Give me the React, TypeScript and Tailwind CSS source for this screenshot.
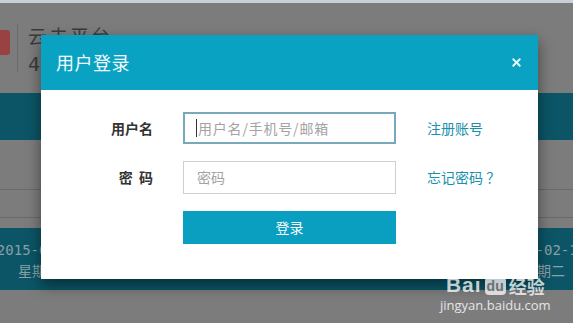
import { X } from 'lucide-react'

const CJK = { fontFamily: '"Microsoft YaHei", "Noto Sans CJK SC", "Noto Sans", sans-serif' }
const MONO = { fontFamily: '"DejaVu Sans Mono", "Liberation Mono", "Noto Sans CJK SC", monospace' }

function DateCol({ date, day }: { date: string; day: string }) {
  return (
    <div className="flex w-[78px] flex-col items-center gap-[3px] whitespace-nowrap text-[14px] leading-[17px] text-[#8aa0a6]" style={MONO}>
      <span>{date}</span>
      <span style={CJK}>{day}</span>
    </div>
  )
}

function Watermark() {
  return (
    <div className="pointer-events-none absolute left-[440px] top-[248px] flex flex-col items-center text-white/75">
      <svg width="40" height="34" viewBox="0 0 44 36" className="-mb-[8px] ml-[14px]" fill="none" stroke="rgba(255,255,255,0.5)" strokeWidth="1.5">
        <ellipse cx="10" cy="12" rx="4" ry="5" />
        <ellipse cx="19" cy="6" rx="4" ry="5" />
        <ellipse cx="29" cy="7" rx="4" ry="5" />
        <ellipse cx="36" cy="15" rx="4" ry="5" />
        <path d="M12 30 C12 20 32 20 32 30" />
      </svg>
      <div className="flex items-end gap-[3px] leading-none">
        <span className="text-[21px] font-bold tracking-[1px]" style={{ fontFamily: 'Arial, "Liberation Sans", sans-serif' }}>Bai</span>
        <span className="rounded-[4px] bg-white/75 px-[2px] text-[14px] font-bold leading-[18px] text-[#6f6f6f]" style={{ fontFamily: '"Liberation Sans", sans-serif' }}>du</span>
        <span className="text-[18px] font-bold" style={CJK}>经验</span>
      </div>
      <span className="mt-[4px] text-[13px] leading-none text-white/80" style={{ fontFamily: '"Open Sans", "Liberation Sans", sans-serif' }}>jingyan.baidu.com</span>
    </div>
  )
}

export default function App() {
  return (
    <div className="relative h-[323px] w-[573px] overflow-hidden bg-[#7c7c7c]" style={CJK}>
      {/* dimmed page behind the dialog */}
      <div className="h-[3px] bg-[#c9d0da]" />
      <div className="flex h-[90px] items-start">
        <div className="mt-[27px] h-[25px] w-[10px] rounded-r-[3px] bg-[#9a4242]" />
        <div className="ml-[7px] mt-[21px] h-[48px] w-px bg-[#6b6b6b]" />
        <div className="ml-[10px] mt-[22px] flex flex-col gap-[6px] text-[#3b3b3b]">
          <span className="text-[19px] leading-[22px] tracking-[2px]">云未平台</span>
          <span className="text-[20px] leading-[22px] tracking-[4px]" style={MONO}>400-800</span>
        </div>
      </div>
      <div className="h-[47px] bg-[#0b5566]" />
      <div className="h-[49px]" />
      <div className="h-px bg-[#696969]" />
      <div className="h-[27px]" />
      <div className="h-px bg-[#696969]" />
      <div className="h-[10px]" />
      <div className="flex h-[62px] items-center justify-between bg-[#0b5566] pt-[2px]">
        <DateCol date="2015-02-09" day="星期一" />
        <div className="-mr-[10px]">
          <DateCol date="2015-02-10" day="星期二" />
        </div>
      </div>

      {/* dialog */}
      <div className="absolute left-[41px] top-[35px] w-[497px] bg-white shadow-[0_6px_14px_rgba(0,0,0,0.45)]">
        <div className="flex h-[55px] items-center justify-between bg-[#0aa2c2] pl-[15px] pr-[15px]">
          <span className="text-[18px] tracking-[0.5px] text-[#f2fbfd]">用户登录</span>
          <X size={13} strokeWidth={3.5} className="text-[#e6f6fa]" />
        </div>
        <div className="flex flex-col gap-[17px] pb-[35px] pt-[22px]">
          <div className="flex items-center">
            <span className="w-[112px] text-right text-[14px] font-bold text-[#333]">用户名</span>
            <div className="ml-[30px] flex h-[32px] w-[213px] items-center border-2 border-[#78a8bd] pl-[11px] text-[14px] text-[#a3a3a3]">
              <span className="mr-px h-[18px] w-px bg-[#333]" />
              <span className="tracking-[0.8px]">用户名/手机号/邮箱</span>
            </div>
            <a className="ml-[31px] text-[14px] text-[#1a90ad]">注册账号</a>
          </div>
          <div className="flex items-center">
            <span className="w-[112px] text-right text-[14px] font-bold text-[#333]">密&nbsp;&nbsp;码</span>
            <div className="ml-[30px] flex h-[33px] w-[213px] items-center border border-[#cfcfcf] pl-[13px] text-[14px] text-[#a3a3a3]">
              密码
            </div>
            <a className="ml-[31px] text-[14px] text-[#1a90ad]">忘记密码 ？</a>
          </div>
          <div className="flex">
            <button className="ml-[142px] h-[33px] w-[213px] bg-[#0a9fc0] text-[14px] text-white">登录</button>
          </div>
        </div>
      </div>

      <Watermark />
    </div>
  )
}
